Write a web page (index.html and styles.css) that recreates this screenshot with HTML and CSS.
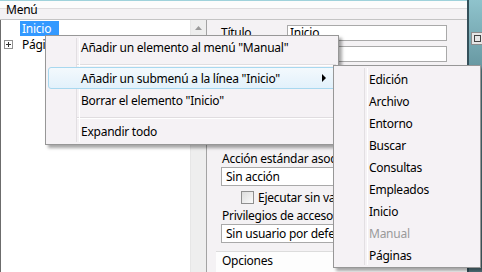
FILE: index.html
```html
<!DOCTYPE html>
<html lang="es">
<head>
  <meta charset="UTF-8" />
  <title>Menú</title>
  <link rel="stylesheet" href="styles.css">
</head>
<body>
  <div class="app">
    <div class="main">
      <div class="header">Menú</div>
      <div class="content">
        <div class="tree">
          <div class="tree-list">
            <div class="node"><span class="node-label selected">Inicio</span></div>
            <div class="node"><span class="expander"></span><span class="node-label">Páginas</span></div>
          </div>
          <div class="scrollbar">
            <div class="scroll-up">
              <svg width="7" height="4" viewBox="0 0 7 4"><path d="M0 4 L3.5 0 L7 4 Z" fill="#9a9a9a"/></svg>
            </div>
          </div>
        </div>

        <div class="props">
          <div class="field-row">
            <span class="field-label">Título</span>
            <div class="text-box">Inicio</div>
          </div>
          <div class="field-row">
            <span class="field-label"></span>
            <div class="text-box"></div>
          </div>

          <div class="lower">
            <div class="label">Acción estándar asociada:</div>
            <div class="combo">Sin acción</div>
            <div class="check-row">
              <span class="checkbox"></span>
              <span>Ejecutar sin validación</span>
            </div>
            <div class="label">Privilegios de acceso:</div>
            <div class="combo">Sin usuario por defecto</div>
          </div>

          <div class="section">Opciones</div>
        </div>
      </div>
    </div>

    <div class="side">
      <div class="side-btn"><span class="side-icon"></span></div>
    </div>

    <!-- context menu -->
    <div class="context-menu">
      <div class="menu-item">Añadir un elemento al menú "Manual"</div>
      <div class="menu-sep"></div>
      <div class="menu-item active">Añadir un submenú a la línea "Inicio"<span class="arrow"></span></div>
      <div class="menu-item">Borrar el elemento "Inicio"</div>
      <div class="menu-sep"></div>
      <div class="menu-item">Expandir todo</div>
    </div>

    <div class="submenu">
      <div class="menu-item">Edición</div>
      <div class="menu-item">Archivo</div>
      <div class="menu-item">Entorno</div>
      <div class="menu-item">Buscar</div>
      <div class="menu-item">Consultas</div>
      <div class="menu-item">Empleados</div>
      <div class="menu-item">Inicio</div>
      <div class="menu-item disabled">Manual</div>
      <div class="menu-item">Páginas</div>
    </div>
  </div>
</body>
</html>
```

FILE: styles.css
```css
* {
  box-sizing: border-box;
  margin: 0;
  padding: 0;
}

body {
  font-family: 'Noto Sans', 'Segoe UI', sans-serif;
  font-size: 12px;
  letter-spacing: -0.25px;
  color: #000;
  width: 482px;
  height: 272px;
  overflow: hidden;
}

.app {
  position: relative;
  display: flex;
  width: 482px;
  height: 272px;
  background: #f4f2f4;
}

.main {
  width: 467px;
  display: flex;
  flex-direction: column;
}

.header {
  height: 20px;
  border-top: 1px solid #9fd2db;
  border-bottom: 1px solid #c4c4c4;
  background: linear-gradient(#fcfcfc 0, #fcfcfc 7px, #dedcde 7px, #dedcde 8px, #f4f2f4 8px);
  padding-left: 6px;
  line-height: 17px;
}

.content {
  flex: 1;
  display: flex;
}

/* tree */
.tree {
  width: 206px;
  display: flex;
  border-left: 1px solid #6c6c6c;
  background: #fff;
}

.tree-list {
  flex: 1;
}

.node {
  height: 16px;
  display: flex;
  align-items: center;
  padding-left: 19px;
  position: relative;
}

.node-label {
  padding: 0 8px 0 2px;
  line-height: 15px;
}

.node-label.selected {
  background: #3399ff;
  color: #fff;
}

.expander {
  position: absolute;
  left: 3px;
  top: 4px;
  width: 9px;
  height: 9px;
  border: 1px solid #919191;
  background: #fff;
}

.expander::before,
.expander::after {
  content: "";
  position: absolute;
  background: #333;
}

.expander::before {
  left: 1px;
  top: 3px;
  width: 5px;
  height: 1px;
}

.expander::after {
  left: 3px;
  top: 1px;
  width: 1px;
  height: 5px;
}

.scrollbar {
  width: 16px;
  background: #eeeeee;
  border-left: 1px solid #e6e6e6;
}

.scroll-up {
  height: 16px;
  display: flex;
  align-items: center;
  justify-content: center;
}

/* property panel */
.props {
  flex: 1;
  border-left: 1px solid #a3a3a3;
  padding-top: 4px;
  display: flex;
  flex-direction: column;
  position: relative;
}

.field-row {
  display: flex;
  align-items: center;
  margin-left: 14px;
  margin-bottom: 5px;
}

.field-label {
  width: 66px;
}

.text-box {
  width: 160px;
  height: 16px;
  border: 1px solid #a9a9a9;
  background: #fff;
  line-height: 14px;
  padding-left: 2px;
}

.lower {
  margin-top: 84px;
  margin-left: 14px;
}

.label {
  line-height: 15px;
  padding-left: 1px;
}

.combo {
  width: 240px;
  height: 19px;
  margin-top: 1px;
  border: 1px solid #a9a9a9;
  background: #fff;
  line-height: 17px;
  padding-left: 4px;
}

.check-row {
  display: flex;
  align-items: center;
  gap: 4px;
  height: 22px;
  padding-left: 20px;
}

.checkbox {
  flex: none;
  width: 13px;
  height: 13px;
  border: 1px solid #8f8f8f;
  background: linear-gradient(135deg, #dcdcdc, #fbfbfb);
}

.section {
  margin-top: 8px;
  margin-left: 9px;
  flex: 1;
  border-top: 1px solid #dcdcdc;
  background: #fdfdfd;
  padding-left: 6px;
  line-height: 18px;
}

/* right strip */
.side {
  width: 15px;
  border-left: 2px solid #34505a;
  background: linear-gradient(#8fc3cc, #5f8f99 30%, #52737c);
  padding-top: 32px;
}

.side-btn {
  height: 13px;
  margin-left: 2px;
  background: #e6e6e6;
  border: 1px solid #8c8c8c;
  border-right: none;
  display: flex;
  align-items: center;
  padding-left: 2px;
}

.side-icon {
  width: 7px;
  height: 7px;
  border: 1px solid #444;
}

/* context menus */
.context-menu,
.submenu {
  position: absolute;
  background: #f5f2f5;
  border: 1px solid #979797;
  box-shadow: 3px 3px 3px rgba(0, 0, 0, 0.35);
}

.context-menu::before,
.submenu::before {
  content: "";
  position: absolute;
  left: 30px;
  top: 2px;
  bottom: 2px;
  width: 2px;
  border-left: 1px solid #e2dfe2;
  border-right: 1px solid #ffffff;
}

.context-menu {
  left: 45px;
  top: 35px;
  width: 294px;
  padding: 0 2px 2px;
}

.submenu {
  left: 333px;
  top: 65px;
  width: 148px;
  padding: 2px 2px 1px;
}

.menu-item {
  position: relative;
  display: flex;
  align-items: center;
  height: 22px;
  padding-left: 32px;
  border: 1px solid transparent;
  border-radius: 3px;
}

.menu-item.active {
  border-color: #a8d8ef;
  background: linear-gradient(#f3f9fd, #e2f1fb);
}

.menu-item.disabled {
  color: #9a9a9a;
}

.arrow {
  margin-left: auto;
  margin-right: 9px;
  width: 0;
  height: 0;
  border-top: 4px solid transparent;
  border-bottom: 4px solid transparent;
  border-left: 4px solid #000;
}

.menu-sep {
  margin: 6px 0 1px 28px;
  height: 2px;
  border-top: 1px solid #e0dde0;
  border-bottom: 1px solid #ffffff;
}
```
